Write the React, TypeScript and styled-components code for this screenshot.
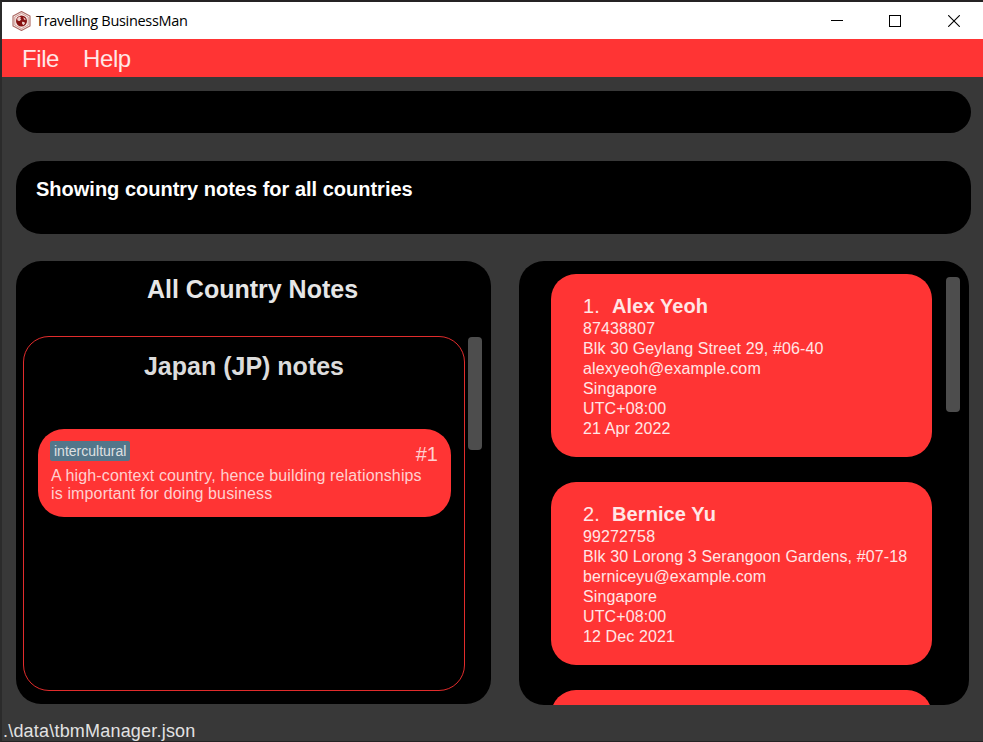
import React from "react";
import styled, { createGlobalStyle } from "styled-components";

const RED = "#ff3434";
const SANS = '"Liberation Sans", Arial, sans-serif';

const GlobalStyle = createGlobalStyle`
  *, *::before, *::after { box-sizing: border-box; }
  body { margin: 0; background: #383838; font-family: ${SANS}; overflow: hidden; }
`;

const Window = styled.div`
  display: flex;
  flex-direction: column;
  width: 983px;
  height: 742px;
  border-top: 2px solid #252324;
  border-left: 2px solid #2b2b2b;
  border-bottom: 1px solid #252324;
  background: #383838;
  overflow: hidden;
`;

const TitleBar = styled.header`
  display: flex;
  align-items: center;
  flex: 0 0 37px;
  padding-left: 10px;
  background: #fff;
`;

const AppTitle = styled.span`
  flex: 1;
  margin-left: 5px;
  font: 14.5px/20px "Open Sans", "Noto Sans", sans-serif;
  letter-spacing: -0.32px;
  color: #000;
  white-space: nowrap;
`;

const WindowButton = styled.span<{ $width: number }>`
  display: flex;
  justify-content: center;
  width: ${(p) => p.$width}px;
`;

const MenuBar = styled.nav`
  display: flex;
  flex: 0 0 38px;
  min-height: 0;
  gap: 24px;
  padding-left: 20px;
  background: ${RED};
`;

const MenuItem = styled.span<{ $width: number }>`
  width: ${(p) => p.$width}px;
  font-size: 24px;
  line-height: 40px;
  letter-spacing: -0.4px;
  color: #ffe6e6;
  white-space: nowrap;
`;

const CommandBox = styled.div`
  flex: 0 0 42px;
  margin: 14px 12px 0 14px;
  border-radius: 21px;
  background: #000;
`;

const ResultBox = styled.div`
  flex: 0 0 73px;
  margin: 28px 12px 0 14px;
  padding: 16px 20px;
  border-radius: 25px;
  background: #000;
  color: #fff;
  font-size: 20px;
  font-weight: bold;
  line-height: 24px;
  white-space: nowrap;
`;

const Panels = styled.main`
  display: flex;
  align-items: flex-start;
  gap: 28px;
  flex: 0 0 444px;
  margin: 27px 14px 0;
`;

const NotesPanel = styled.section`
  width: 475px;
  height: 443px;
  padding: 13px 9px 13px 7px;
  border-radius: 25px;
  background: #000;
`;

const PanelTitle = styled.h1`
  margin: 0 0 32px;
  font-size: 25px;
  line-height: 30px;
  color: #e6e6e6;
  text-align: center;
`;

const ScrollArea = styled.div`
  display: flex;
  align-items: flex-start;
  gap: 3px;
`;

const ScrollThumb = styled.div<{ $height: number; $top: number }>`
  flex: 0 0 14px;
  height: ${(p) => p.$height}px;
  margin-top: ${(p) => p.$top}px;
  border-radius: 4px;
  background: #4d4d4d;
`;

const CountryGroup = styled.div`
  width: 442px;
  height: 355px;
  padding: 14px 13px 0 14px;
  border: 1px solid #e12c2c;
  border-radius: 26px;
`;

const CountryTitle = styled.h2`
  margin: 0 0 48px;
  padding-right: 1px;
  font-size: 25px;
  line-height: 30px;
  color: #dcdcdc;
  text-align: center;
`;

const NoteCard = styled.article`
  height: 88px;
  padding: 12px 13px 0 13px;
  border-radius: 26px;
  background: ${RED};
  color: #ffd0d0;
`;

const NoteHeader = styled.div`
  display: flex;
  justify-content: space-between;
  height: 26px;
`;

const Tag = styled.span`
  height: 20px;
  margin-left: -1px;
  padding: 0 4px;
  border-radius: 2px;
  background: #53768a;
  color: #dfe0e2;
  font-size: 14px;
  line-height: 20px;
`;

const NoteNumber = styled.span`
  font-size: 20px;
  line-height: 26px;
`;

const NoteText = styled.p`
  margin: 0;
  font-size: 16px;
  line-height: 18px;
  letter-spacing: 0.14px;
  white-space: nowrap;
`;

const ContactsPanel = styled.section`
  display: flex;
  width: 450px;
  height: 444px;
  padding: 13px 9px 0 32px;
  border-radius: 25px;
  background: #000;
  overflow: hidden;
`;

const ContactList = styled.div`
  display: flex;
  flex-direction: column;
  gap: 25px;
  width: 381px;
  margin-right: 14px;
`;

const ContactCard = styled.article`
  flex: 0 0 183px;
  padding: 20px 0 0 32px;
  border-radius: 25px;
  background: ${RED};
  color: #ffe6e6;
`;

const ContactName = styled.div`
  display: flex;
  margin-bottom: 1px;
  font-size: 20px;
  line-height: 24px;
  letter-spacing: 0.1px;
`;

const ContactIndex = styled.span`
  width: 29px;
`;

const ContactLine = styled.div`
  font-size: 16px;
  line-height: 20px;
  letter-spacing: 0.12px;
  white-space: nowrap;
`;

const StatusBar = styled.footer`
  margin-top: 15px;
  padding-left: 1px;
  font-size: 18px;
  line-height: 22px;
  letter-spacing: 0.2px;
  color: #e2e2e2;
`;

const contacts = [
  {
    name: "Alex Yeoh",
    lines: ["87438807", "Blk 30 Geylang Street 29, #06-40", "alexyeoh@example.com", "Singapore", "UTC+08:00", "21 Apr 2022"],
  },
  {
    name: "Bernice Yu",
    lines: ["99272758", "Blk 30 Lorong 3 Serangoon Gardens, #07-18", "berniceyu@example.com", "Singapore", "UTC+08:00", "12 Dec 2021"],
  },
];

function GlobeLogo() {
  return (
    <svg width="19" height="20" viewBox="0 0 19 20">
      <path d="M9.500.5 18 5v10l-8.500 4.500L1 15V5z" fill="#f9ece9" stroke="#a96560" strokeWidth="1.100" />
      <path d="M9.500 2.300 16.200 6v8l-6.700 3.700L2.800 14V6z" fill="none" stroke="#c48a85" strokeWidth=".8" />
      <circle cx="9.500" cy="10" r="5.500" fill="#861212" />
      <path d="M5 7.800 7.200 5.600l1.700.6-.6 1.500 1 .5-1.500 1.900-2-.4zM10 10.800l2.200.1.900 1.300-1.800 2-1.200-1.500zM11.200 6.200l2 1.300.5 1.700-1.700-.6z" fill="#edd0cc" />
    </svg>
  );
}

export default function App() {
  return (
    <>
      <GlobalStyle />
      <Window>
        <TitleBar>
          <GlobeLogo />
          <AppTitle>Travelling BusinessMan</AppTitle>
          <WindowButton $width={58}>
            <svg width="12" height="12" shapeRendering="crispEdges"><path d="M0 5.500h12" stroke="#000" /></svg>
          </WindowButton>
          <WindowButton $width={58}>
            <svg width="12" height="12" shapeRendering="crispEdges"><path d="M.5.5h11v11H.5z" fill="none" stroke="#000" /></svg>
          </WindowButton>
          <WindowButton $width={59}>
            <svg width="12" height="12"><path d="M.2.2l11.600 11.600M11.800.2.2 11.800" stroke="#000" strokeWidth="1.100" /></svg>
          </WindowButton>
        </TitleBar>
        <MenuBar>
          <MenuItem $width={37}>File</MenuItem>
          <MenuItem $width={48}>Help</MenuItem>
        </MenuBar>
        <CommandBox />
        <ResultBox>Showing country notes for all countries</ResultBox>
        <Panels>
          <NotesPanel>
            <PanelTitle>All Country Notes</PanelTitle>
            <ScrollArea>
              <CountryGroup>
                <CountryTitle>Japan (JP) notes</CountryTitle>
                <NoteCard>
                  <NoteHeader>
                    <Tag>intercultural</Tag>
                    <NoteNumber>#1</NoteNumber>
                  </NoteHeader>
                  <NoteText>
                    A high-context country, hence building relationships
                    <br />
                    is important for doing business
                  </NoteText>
                </NoteCard>
              </CountryGroup>
              <ScrollThumb $height={113} $top={1} />
            </ScrollArea>
          </NotesPanel>
          <ContactsPanel>
            <ContactList>
              {contacts.map((contact, i) => (
                <ContactCard key={contact.name}>
                  <ContactName>
                    <ContactIndex>{i + 1}.</ContactIndex>
                    <b>{contact.name}</b>
                  </ContactName>
                  {contact.lines.map((line) => (
                    <ContactLine key={line}>{line}</ContactLine>
                  ))}
                </ContactCard>
              ))}
              <ContactCard />
            </ContactList>
            <ScrollThumb $height={135} $top={2.5} />
          </ContactsPanel>
        </Panels>
        <StatusBar>.\data\tbmManager.json</StatusBar>
      </Window>
    </>
  );
}
